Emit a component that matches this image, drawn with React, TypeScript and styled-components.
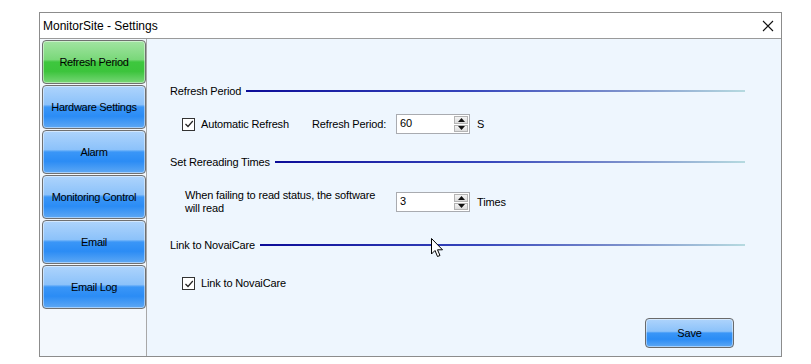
import React from "react";
import styled, { createGlobalStyle, css } from "styled-components";

const GlobalStyle = createGlobalStyle`
	html, body {
		margin: 0;
		padding: 0;
		background: #ffffff;
	}
	body {
		font-family: "Liberation Sans", Arial, sans-serif;
		font-size: 11px;
		letter-spacing: -0.15px;
		color: #000;
	}
`;

const Window = styled.div`
	position: relative;
	margin: 12px 0 0 39px;
	width: 741px;
	height: 343px;
	border: 1px solid #8c8c8c;
	display: flex;
	flex-direction: column;
	background: #fff;
`;

const TitleBar = styled.div`
	height: 25px;
	display: flex;
	align-items: center;
	justify-content: space-between;
	padding: 0 7px 0 3px;
	font-family: "Liberation Sans", Arial, sans-serif;
	font-size: 12px;
	letter-spacing: 0;
	border-bottom: 1px solid #9a9a9a;
`;

const Body = styled.div`
	flex: 1;
	display: flex;
	min-height: 0;
`;

const Sidebar = styled.div`
	width: 107px;
	border-right: 1px solid #a8a8a8;
	background: #f3f8fd;
	display: flex;
	flex-direction: column;
	gap: 1px;
	padding: 1px 0 0 2px;
	box-sizing: border-box;
`;

const glossBlue = css`
	background: linear-gradient(
		to bottom,
		#aed4fc 0%,
		#8cc2fa 44%,
		#3a96f7 50%,
		#2b8cf5 72%,
		#5ea8f4 100%
	);
`;

const glossGreen = css`
	background: linear-gradient(
		to bottom,
		#a2e4a2 0%,
		#7ad87a 44%,
		#3ec73e 50%,
		#3cc43c 72%,
		#78d678 100%
	);
`;

const NavButton = styled.div<{ $active?: boolean }>`
	width: 104px;
	height: 44px;
	box-sizing: border-box;
	border: 1px solid #707070;
	border-radius: 4px;
	box-shadow: inset 0 0 0 1px rgba(255, 255, 255, 0.45);
	display: flex;
	align-items: center;
	justify-content: center;
	font-size: 11px;
	letter-spacing: -0.3px;
	color: #000;
	${(p) => (p.$active ? glossGreen : glossBlue)}
`;

const Content = styled.div`
	flex: 1;
	background: #eef6fe;
	display: flex;
	flex-direction: column;
	padding: 45px 36px 0 23px;
	position: relative;
`;

const SectionHeader = styled.div<{ $top: number }>`
	display: flex;
	align-items: center;
	gap: 5px;
	height: 14px;
	margin-top: ${(p) => p.$top}px;
	white-space: nowrap;
`;

const HeaderLine = styled.div`
	flex: 1;
	height: 2px;
	background: linear-gradient(to right, #0c0c98 0%, #3646bc 45%, #7c90cc 75%, #b6dae0 100%);
`;

const Row = styled.div<{ $top: number; $indent: number }>`
	display: flex;
	align-items: center;
	margin-top: ${(p) => p.$top}px;
	padding-left: ${(p) => p.$indent}px;
`;

const CheckBox = styled.span`
	width: 11px;
	height: 11px;
	border: 1px solid #333;
	background: #fff;
	display: inline-flex;
	align-items: center;
	justify-content: center;
	margin-right: 6px;
`;

const Label = styled.span<{ $width?: number; $gap?: number }>`
	${(p) => (p.$width ? `width: ${p.$width}px;` : "")}
	margin-right: ${(p) => p.$gap ?? 0}px;
	line-height: 13px;
`;

const Spin = styled.div`
	display: flex;
	width: 74px;
	height: 20px;
	box-sizing: border-box;
	border: 1px solid #a9abb0;
	background: #fff;
	margin-right: 7px;
`;

const SpinValue = styled.div`
	flex: 1;
	padding: 2px 0 0 3px;
	font-size: 11px;
`;

const SpinArrows = styled.div`
	width: 14px;
	display: flex;
	flex-direction: column;
	gap: 1px;
	padding: 1px 1px 1px 0;
`;

const SpinHalf = styled.div`
	flex: 1;
	background: linear-gradient(to bottom, #f4f4f4, #dcdcdc);
	border: 1px solid #b4b4b4;
	display: flex;
	align-items: center;
	justify-content: center;
`;

const Footer = styled.div`
	margin-top: auto;
	margin-bottom: 8px;
	display: flex;
	justify-content: flex-end;
	padding-right: 11px;
`;

const SaveButton = styled.div`
	width: 89px;
	height: 30px;
	box-sizing: border-box;
	border: 1px solid #6a6a6a;
	border-radius: 4px;
	box-shadow: inset 0 0 0 1px rgba(255, 255, 255, 0.45);
	display: flex;
	align-items: center;
	justify-content: center;
	${glossBlue}
`;

const Cursor = styled.svg`
	position: absolute;
	left: 284px;
	top: 199px;
`;

function Check() {
	return (
		<CheckBox>
			<svg width="10" height="10" viewBox="0 0 10 10">
				<path d="M1.5 5 L4 7.5 L8.8 2" fill="none" stroke="#222" strokeWidth="1.2" />
			</svg>
		</CheckBox>
	);
}

function SpinBox({ value }: { value: string }) {
	return (
		<Spin>
			<SpinValue>{value}</SpinValue>
			<SpinArrows>
				<SpinHalf>
					<svg width="7" height="4" viewBox="0 0 7 4">
						<path d="M0 4 L3.5 0 L7 4 Z" fill="#111" />
					</svg>
				</SpinHalf>
				<SpinHalf>
					<svg width="7" height="4" viewBox="0 0 7 4">
						<path d="M0 0 L3.5 4 L7 0 Z" fill="#111" />
					</svg>
				</SpinHalf>
			</SpinArrows>
		</Spin>
	);
}

const navItems = ["Refresh Period", "Hardware Settings", "Alarm", "Monitoring Control", "Email", "Email Log"];

export default function App() {
	return (
		<>
			<GlobalStyle />
			<Window>
				<TitleBar>
					<span>MonitorSite - Settings</span>
					<svg width="12" height="12" viewBox="0 0 12 12">
						<path d="M1 1 L11 11 M11 1 L1 11" stroke="#111" strokeWidth="1.1" />
					</svg>
				</TitleBar>
				<Body>
					<Sidebar>
						{navItems.map((item, i) => (
							<NavButton key={item} $active={i === 0}>
								{item}
							</NavButton>
						))}
					</Sidebar>
					<Content>
						<SectionHeader $top={0}>
							Refresh Period
							<HeaderLine />
						</SectionHeader>
						<Row $top={16} $indent={12}>
							<Check />
							<Label $width={111}>Automatic Refresh</Label>
							<Label $width={84}>Refresh Period:</Label>
							<SpinBox value="60" />
							<Label>S</Label>
						</Row>
						<SectionHeader $top={21}>
							Set Rereading Times
							<HeaderLine />
						</SectionHeader>
						<Row $top={20} $indent={15}>
							<Label $width={196} $gap={15}>
								When failing to read status, the software will read
							</Label>
							<SpinBox value="3" />
							<Label>Times</Label>
						</Row>
						<SectionHeader $top={23}>
							Link to NovaiCare
							<HeaderLine />
						</SectionHeader>
						<Row $top={25} $indent={12}>
							<Check />
							<Label>Link to NovaiCare</Label>
						</Row>
						<Footer>
							<SaveButton>Save</SaveButton>
						</Footer>
						<Cursor width="13" height="20" viewBox="0 0 13 20">
							<path
								d="M0.5 0.5 L0.5 16 L4 12.5 L6.5 18.5 L9 17.5 L6.5 11.8 L11.5 11.8 Z"
								fill="#fff"
								stroke="#000"
								strokeWidth="1"
								strokeLinejoin="miter"
							/>
						</Cursor>
					</Content>
				</Body>
			</Window>
		</>
	);
}
